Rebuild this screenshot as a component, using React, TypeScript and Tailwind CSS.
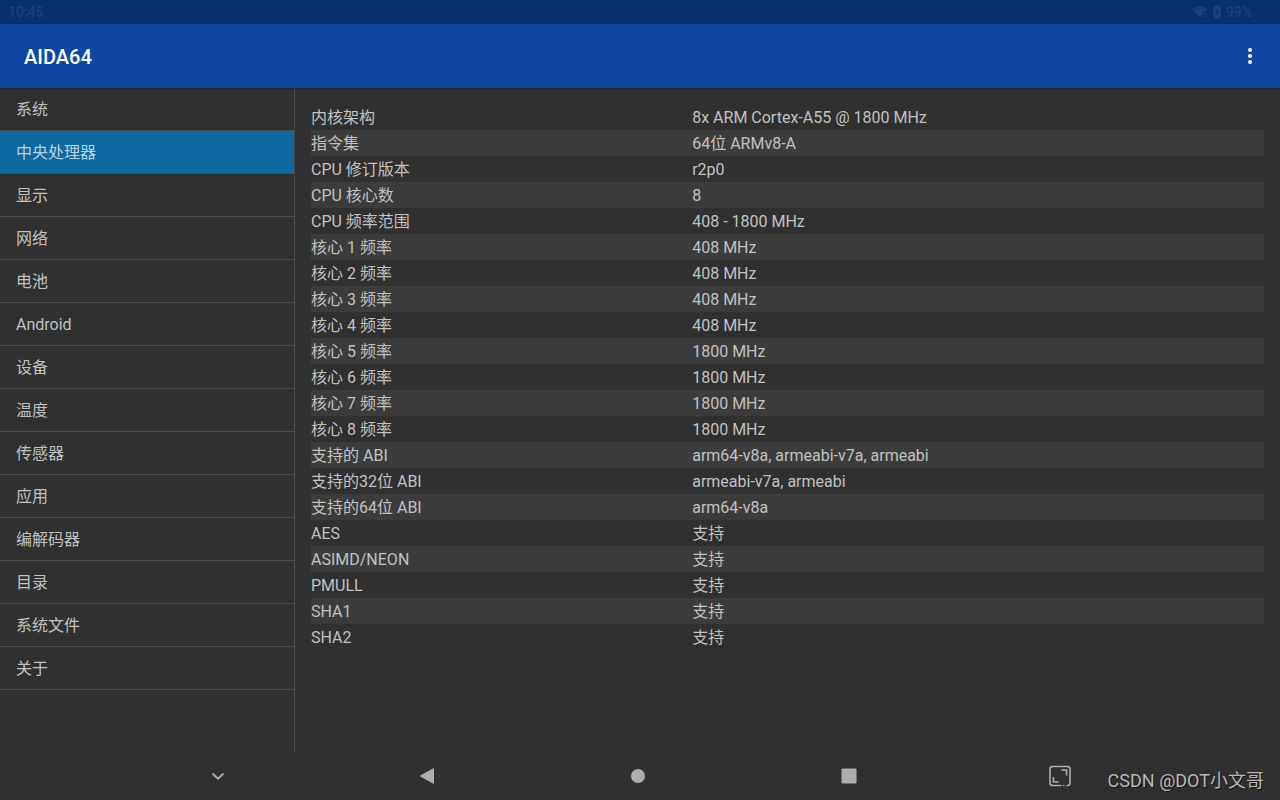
import type { ReactNode } from "react";

const MENU_ITEMS = [
  "系统",
  "中央处理器",
  "显示",
  "网络",
  "电池",
  "Android",
  "设备",
  "温度",
  "传感器",
  "应用",
  "编解码器",
  "目录",
  "系统文件",
  "关于",
];

const ACTIVE_ITEM = "中央处理器";

const CPU_INFO = [
  { label: "内核架构", value: "8x ARM Cortex-A55 @ 1800 MHz" },
  { label: "指令集", value: "64位 ARMv8-A" },
  { label: "CPU 修订版本", value: "r2p0" },
  { label: "CPU 核心数", value: "8" },
  { label: "CPU 频率范围", value: "408 - 1800 MHz" },
  { label: "核心 1 频率", value: "408 MHz" },
  { label: "核心 2 频率", value: "408 MHz" },
  { label: "核心 3 频率", value: "408 MHz" },
  { label: "核心 4 频率", value: "408 MHz" },
  { label: "核心 5 频率", value: "1800 MHz" },
  { label: "核心 6 频率", value: "1800 MHz" },
  { label: "核心 7 频率", value: "1800 MHz" },
  { label: "核心 8 频率", value: "1800 MHz" },
  { label: "支持的 ABI", value: "arm64-v8a, armeabi-v7a, armeabi" },
  { label: "支持的32位 ABI", value: "armeabi-v7a, armeabi" },
  { label: "支持的64位 ABI", value: "arm64-v8a" },
  { label: "AES", value: "支持" },
  { label: "ASIMD/NEON", value: "支持" },
  { label: "PMULL", value: "支持" },
  { label: "SHA1", value: "支持" },
  { label: "SHA2", value: "支持" },
];

function StatusBar() {
  return (
    <div className="flex h-6 items-center justify-between bg-[#082e6b] pl-2 pr-7 text-sm font-medium text-[#1a4079]">
      <span>10:45</span>
      <div className="flex items-center">
        <svg className="mr-1 h-4 w-4" viewBox="0 0 16 16" fill="currentColor">
          <path d="M7.500 13.500 0.500 5.200C4.500 1.200 11 1.200 15 5.200L12.500 8H11v1.500z" />
          <path
            d="M2 5.800C5.300 3.500 10.200 3.500 13.500 5.800"
            fill="none"
            stroke="#082e6b"
            strokeWidth="0.7"
          />
          <path d="M12 9h1v4h-1zM14 9h1v4h-1z" />
        </svg>
        <svg className="mr-1 h-4 w-[10px]" viewBox="0 0 10 16">
          <path
            d="M3 1.500h4V3h1q1 0 1 1v9.500q0 1-1 1H2q-1 0-1-1V4q0-1 1-1h1z"
            fill="currentColor"
          />
          <path d="M5.600 5.300 3.500 9h1.200v2.800L6.500 8.300H5.600z" fill="#082e6b" />
        </svg>
        <span>99%</span>
      </div>
    </div>
  );
}

function AppBar() {
  return (
    <header className="relative flex h-16 items-center justify-between bg-[#0d47a1] pl-6 pr-[18px] shadow-[0_1px_2px_rgba(0,0,0,0.3)]">
      <h1 className="pt-0.5 text-xl font-medium text-white">AIDA64</h1>
      <button type="button" aria-label="更多选项">
        <svg className="h-6 w-6" viewBox="0 0 24 24" fill="white">
          <circle cx="12" cy="6" r="2" />
          <circle cx="12" cy="12" r="2" />
          <circle cx="12" cy="18" r="2" />
        </svg>
      </button>
    </header>
  );
}

function Sidebar() {
  return (
    <nav className="w-[295px] shrink-0 border-r border-[#4a4a4a]">
      <ul>
        {MENU_ITEMS.map((item) => (
          <li key={item} className="border-b border-[#4a4a4a]">
            <a
              href="#"
              aria-current={item === ACTIVE_ITEM ? "page" : undefined}
              className={
                item === ACTIVE_ITEM
                  ? "flex h-[42px] items-center bg-[#0e68a2] px-4 pt-0.5 text-[#b7d2e3]"
                  : "flex h-[42px] items-center px-4 pt-0.5"
              }
            >
              {item}
            </a>
          </li>
        ))}
      </ul>
    </nav>
  );
}

function InfoTable() {
  return (
    <main className="min-w-0 flex-1 p-4">
      <table className="w-full table-fixed border-collapse text-left">
        <tbody>
          {CPU_INFO.map((row) => (
            <tr key={row.label} className="even:bg-[#3c3c3c]">
              <th scope="row" className="w-2/5 p-0 pt-0.5 font-normal">
                {row.label}
              </th>
              <td className="p-0 pt-0.5">{row.value}</td>
            </tr>
          ))}
        </tbody>
      </table>
    </main>
  );
}

function NavButton({ label, children }: { label: string; children: ReactNode }) {
  return (
    <button
      type="button"
      aria-label={label}
      className="flex h-12 flex-1 items-center justify-center text-[#adadad]"
    >
      <svg className="h-6 w-6" viewBox="0 0 24 24" fill="currentColor">
        {children}
      </svg>
    </button>
  );
}

function NavigationBar() {
  return (
    <footer className="relative flex pl-28 pr-[115px]">
      <NavButton label="收起">
        <path
          d="m7.500 9.500 5.500 5.200 5.500-5.200"
          fill="none"
          stroke="currentColor"
          strokeWidth="2"
        />
      </NavButton>
      <NavButton label="返回">
        <path d="M18 4v16L4.500 12.700Q3.500 12 4.500 11.300z" />
      </NavButton>
      <NavButton label="主屏幕">
        <circle cx="12" cy="12" r="7" />
      </NavButton>
      <NavButton label="最近任务">
        <rect x="4.500" y="4.500" width="15" height="15" rx="1" />
      </NavButton>
      <NavButton label="截屏">
        <g fill="none" stroke="currentColor" strokeWidth="1.600">
          <path d="M13.500 21.500H4.500q-2.500 0-2.500-2.500V5q0-2.500 2.500-2.500h15Q22 2.500 22 5v14q0 2.500-2.500 2.500h-1" />
          <path d="M15 21.500h1.500" />
          <path d="M13.500 6H18.500v5.500M5.500 13v5H10.500" />
        </g>
      </NavButton>
      <p className="absolute bottom-[7px] right-4 text-lg leading-6 text-[#b8b8b8] [text-shadow:1px_1px_1px_rgba(0,0,0,0.6)]">
        CSDN @DOT小文哥
      </p>
    </footer>
  );
}

export default function App() {
  return (
    <div className="flex min-h-screen flex-col bg-[#303030] font-[Roboto,'Noto_Sans_CJK_SC',sans-serif] text-base leading-6 text-[#c1c1c1]">
      <StatusBar />
      <AppBar />
      <div className="flex flex-1">
        <Sidebar />
        <InfoTable />
      </div>
      <NavigationBar />
    </div>
  );
}
